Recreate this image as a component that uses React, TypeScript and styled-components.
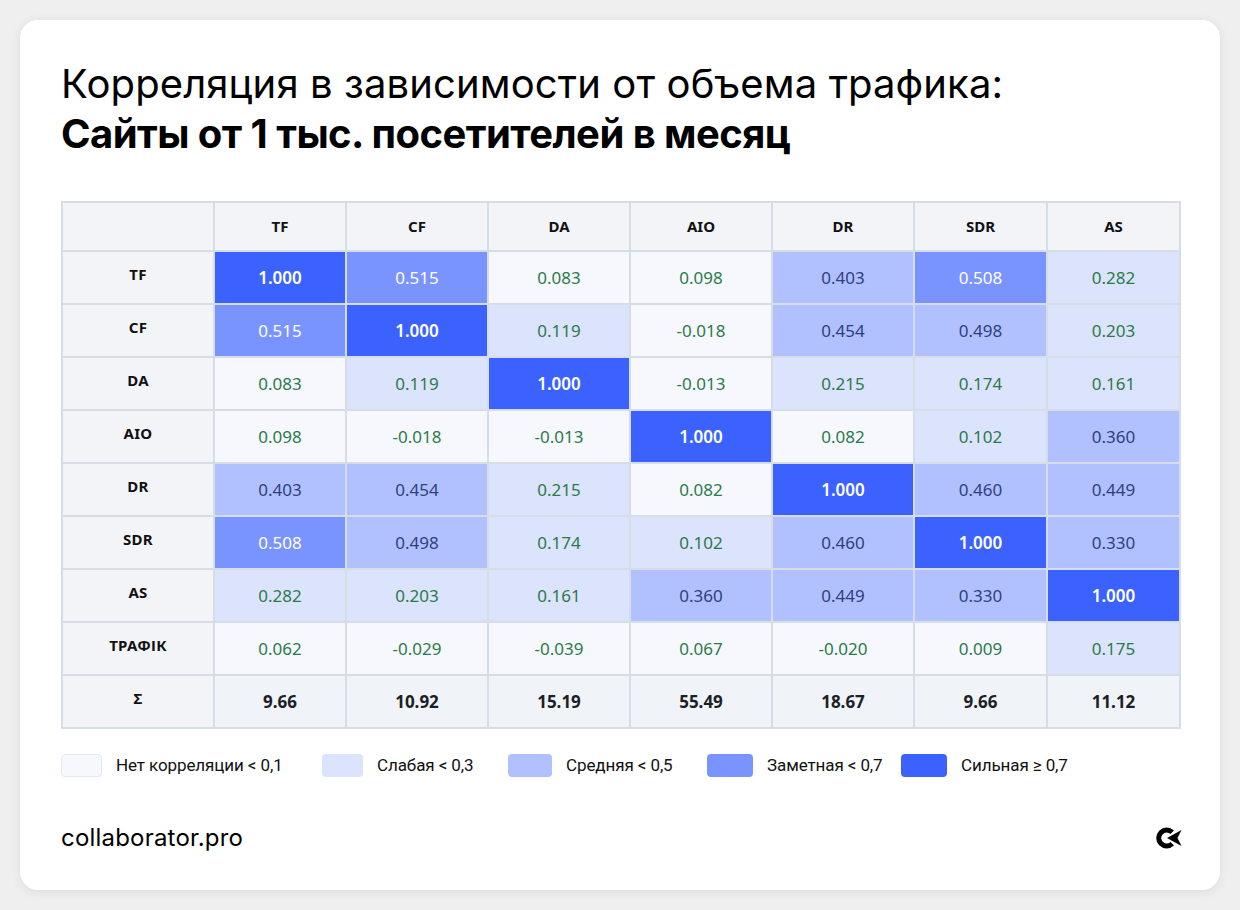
import React from "react";
import styled, { createGlobalStyle } from "styled-components";

const GlobalStyle = createGlobalStyle`
  html, body {
    margin: 0;
    padding: 0;
    background: #efefef;
  }
  * {
    box-sizing: border-box;
  }
`;

const Page = styled.div`
  width: 1240px;
  height: 910px;
  padding: 20px;
  background: #efefef;
`;

const Card = styled.div`
  width: 1200px;
  height: 870px;
  background: #ffffff;
  border-radius: 18px;
  box-shadow: 0 2px 12px rgba(0, 0, 0, 0.08);
  padding: 39px 41px 0 41px;
  display: flex;
  flex-direction: column;
`;

const Title = styled.h1`
  margin: 0;
  font-family: Inter, "Noto Sans", sans-serif;
  font-size: 40px;
  line-height: 50px;
  font-weight: 400;
  color: #000;
  letter-spacing: 0.12px;
`;

const TitleBold = styled.span`
  display: block;
  font-weight: 700;
  letter-spacing: -0.55px;
`;

const Table = styled.table`
  margin-top: 42px;
  width: 1118px;
  border-collapse: collapse;
  table-layout: fixed;
  font-family: "Noto Sans", "Open Sans", sans-serif;
  border: 2px solid #d6dde7;
`;

const HeadCell = styled.th`
  height: 49px;
  background: #f3f4f8;
  border: 2px solid #d6dde7;
  font-size: 15px;
  font-weight: 700;
  color: #111;
  text-align: center;
  padding-bottom: 3px;
`;

const RowHead = styled.th`
  height: 53px;
  background: #f3f4f8;
  border: 2px solid #d6dde7;
  font-size: 15px;
  font-weight: 700;
  color: #111;
  text-align: center;
  padding-bottom: 8px;
  letter-spacing: 0.3px;
`;

type Level = "none" | "weak" | "medium" | "notable" | "strong";

const levelBg: Record<Level, string> = {
  none: "#f6f8fe",
  weak: "#dce4fd",
  medium: "#b1c1ff",
  notable: "#7a94ff",
  strong: "#3b62ff",
};

const levelText: Record<Level, string> = {
  none: "#2c7a4b",
  weak: "#2c7a4b",
  medium: "#2f3f7f",
  notable: "#ffffff",
  strong: "#ffffff",
};

const ValueCell = styled.td<{ $level: Level }>`
  height: 53px;
  background: ${(p) => levelBg[p.$level]};
  color: ${(p) => levelText[p.$level]};
  border: 2px solid #d6dde7;
  font-size: 17px;
  font-weight: ${(p) => (p.$level === "strong" ? 600 : 400)};
  text-align: center;
`;

const SumCell = styled.td`
  height: 53px;
  background: #f0f3f8;
  border: 2px solid #d6dde7;
  font-size: 17px;
  font-weight: 700;
  color: #1c1f26;
  text-align: center;
`;

const Legend = styled.div`
  width: 1118px;
  height: 60px;
  background: #ffffff;
  display: grid;
  grid-template-columns: 261px 186px 199px 194px auto;
  align-items: center;
  padding-top: 12px;
`;

const LegendItem = styled.div`
  display: flex;
  align-items: center;
  gap: 14px;
  font-family: Roboto, "Noto Sans", sans-serif;
  font-size: 17px;
  letter-spacing: -0.1px;
  color: #111;
`;

const Swatch = styled.span<{ $level: Level; $w: number }>`
  flex: none;
  width: ${(p) => p.$w}px;
  height: 23px;
  border-radius: 4px;
  background: ${(p) => levelBg[p.$level]};
  border: 1px solid ${(p) => (p.$level === "none" ? "#e3e8f3" : "transparent")};
`;

const Footer = styled.div`
  margin-top: 34px;
  display: flex;
  align-items: center;
  justify-content: space-between;
  width: 1121px;
`;

const Brand = styled.div`
  font-family: Inter, "Noto Sans", sans-serif;
  font-size: 24px;
  color: #000;
  letter-spacing: 0.2px;
`;

const cols = ["TF", "CF", "DA", "AIO", "DR", "SDR", "AS"];
const widths = [152, 132, 142, 142, 142, 142, 133, 133];

const rows: { name: string; values: number[] }[] = [
  { name: "TF", values: [1, 0.515, 0.083, 0.098, 0.403, 0.508, 0.282] },
  { name: "CF", values: [0.515, 1, 0.119, -0.018, 0.454, 0.498, 0.203] },
  { name: "DA", values: [0.083, 0.119, 1, -0.013, 0.215, 0.174, 0.161] },
  { name: "AIO", values: [0.098, -0.018, -0.013, 1, 0.082, 0.102, 0.36] },
  { name: "DR", values: [0.403, 0.454, 0.215, 0.082, 1, 0.46, 0.449] },
  { name: "SDR", values: [0.508, 0.498, 0.174, 0.102, 0.46, 1, 0.33] },
  { name: "AS", values: [0.282, 0.203, 0.161, 0.36, 0.449, 0.33, 1] },
  { name: "ТРАФІК", values: [0.062, -0.029, -0.039, 0.067, -0.02, 0.009, 0.175] },
];

const sums = ["9.66", "10.92", "15.19", "55.49", "18.67", "9.66", "11.12"];

const legend: { level: Level; label: string; w: number }[] = [
  { level: "none", label: "Нет корреляции < 0,1", w: 41 },
  { level: "weak", label: "Слабая < 0,3", w: 41 },
  { level: "medium", label: "Средняя < 0,5", w: 44 },
  { level: "notable", label: "Заметная < 0,7", w: 46 },
  { level: "strong", label: "Сильная ≥ 0,7", w: 46 },
];

function levelOf(v: number): Level {
  const a = Math.abs(v);
  if (a < 0.1) return "none";
  if (a < 0.3) return "weak";
  if (a < 0.5) return "medium";
  if (a < 0.7) return "notable";
  return "strong";
}

function Logo() {
  return (
    <svg width="27" height="22" viewBox="0 0 27 22">
      <path
        d="M17.2 5.2 A8 8 0 1 0 17.2 16.8"
        fill="none"
        stroke="#000"
        strokeWidth="5"
      />
      <polygon points="26.5,3 12,11 26.5,19 22.5,11" fill="#000" />
    </svg>
  );
}

function App() {
  return (
    <Page>
      <GlobalStyle />
      <Card>
        <Title>
          Корреляция в зависимости от объема трафика:
          <TitleBold>Сайты от 1 тыс. посетителей в месяц</TitleBold>
        </Title>

        <Table>
          <colgroup>
            {widths.map((w, i) => (
              <col key={i} style={{ width: w }} />
            ))}
          </colgroup>
          <thead>
            <tr>
              <HeadCell />
              {cols.map((c) => (
                <HeadCell key={c}>{c}</HeadCell>
              ))}
            </tr>
          </thead>
          <tbody>
            {rows.map((r) => (
              <tr key={r.name}>
                <RowHead>{r.name}</RowHead>
                {r.values.map((v, i) => (
                  <ValueCell key={i} $level={levelOf(v)}>
                    {v.toFixed(3)}
                  </ValueCell>
                ))}
              </tr>
            ))}
            <tr>
              <RowHead>Σ</RowHead>
              {sums.map((s, i) => (
                <SumCell key={i}>{s}</SumCell>
              ))}
            </tr>
          </tbody>
        </Table>

        <Legend>
          {legend.map((l) => (
            <LegendItem key={l.level}>
              <Swatch $level={l.level} $w={l.w} />
              {l.label}
            </LegendItem>
          ))}
        </Legend>

        <Footer>
          <Brand>collaborator.pro</Brand>
          <Logo />
        </Footer>
      </Card>
    </Page>
  );
}

export default App;
